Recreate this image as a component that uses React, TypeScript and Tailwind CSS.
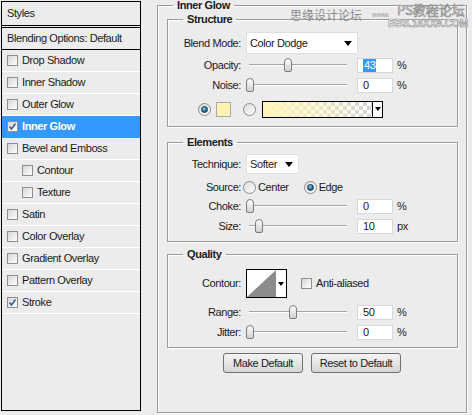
import React from "react";

const font = { fontFamily: '"Liberation Sans", Arial, sans-serif' };

function Check({ checked }: { checked?: boolean }) {
  return (
    <div className="w-[11px] h-[11px] border border-[#8f8f8f] bg-gradient-to-br from-[#d6d6d6] to-[#ffffff] flex items-center justify-center shrink-0">
      {checked && (
        <svg width="9" height="9" viewBox="0 0 9 9">
          <path d="M1.5 4.5 L3.5 7 L7.5 1.5" stroke="#3e5d92" strokeWidth="1.6" fill="none" />
        </svg>
      )}
    </div>
  );
}

function Radio({ on }: { on?: boolean }) {
  return (
    <div className="w-[13px] h-[13px] rounded-full border border-[#8a8a8a] bg-gradient-to-br from-[#dcdcdc] to-[#ffffff] flex items-center justify-center shrink-0">
      {on && (
        <div className="w-[7px] h-[7px] rounded-full bg-[radial-gradient(circle_at_40%_35%,#8fd0ef,#1d6b94_60%,#0f3e5c)] border border-[#0f3550]" />
      )}
    </div>
  );
}

function Arrow() {
  return (
    <svg width="8" height="5" viewBox="0 0 8 5" className="shrink-0">
      <path d="M0 0 H8 L4 5 Z" fill="#000" />
    </svg>
  );
}

function Slider({ pos }: { pos: number }) {
  return (
    <div className="relative w-[104px] h-[16px] shrink-0">
      <div className="absolute left-[3px] right-[3px] top-[7px] h-[1px] bg-[#a4a4a4]" />
      <div className="absolute left-[3px] right-[3px] top-[8px] h-[1px] bg-white" />
      <div
        className="absolute top-[1px] w-[8px] h-[14px] rounded-t-[4px] rounded-b-[2px] border border-[#7d7d7d] bg-gradient-to-b from-[#ffffff] to-[#cfcfcf]"
        style={{ left: pos }}
      />
    </div>
  );
}

function NumBox({ value, sel }: { value: string; sel?: boolean }) {
  return (
    <div className="w-[36px] h-[15px] bg-white border border-[#d4d9e0] flex items-center pl-[5px] shrink-0 text-[11px] leading-[13px]">
      {sel ? <span className="bg-[#3399ff] text-white px-[1px]">{value}</span> : value}
    </div>
  );
}

function Label({ children }: { children: React.ReactNode }) {
  return <div className="w-[73px] text-right shrink-0">{children}</div>;
}

function SliderRow({
  label,
  pos,
  value,
  unit,
  sel,
  mt,
}: {
  label: string;
  pos: number;
  value: string;
  unit: string;
  sel?: boolean;
  mt: string;
}) {
  return (
    <div className={"flex items-center h-[16px] " + mt}>
      <Label>{label}</Label>
      <div className="ml-[5px]">
        <Slider pos={pos} />
      </div>
      <div className="ml-[7px]">
        <NumBox value={value} sel={sel} />
      </div>
      <div className="ml-[4px]">{unit}</div>
    </div>
  );
}

function Group({
  title,
  className,
  children,
}: {
  title: string;
  className?: string;
  children: React.ReactNode;
}) {
  return (
    <fieldset
      className={
        "w-[291px] border border-[#9a9a9a] shadow-[1px_1px_0_#ffffff,inset_1px_1px_0_#ffffff] " +
        (className || "")
      }
    >
      <legend className="ml-[15px] px-[4px] font-bold text-[11px] leading-[12px]">{title}</legend>
      {children}
    </fieldset>
  );
}

const rows: { label: string; checked?: boolean; indent?: boolean; active?: boolean }[] = [
  { label: "Drop Shadow" },
  { label: "Inner Shadow" },
  { label: "Outer Glow" },
  { label: "Inner Glow", checked: true, active: true },
  { label: "Bevel and Emboss" },
  { label: "Contour", indent: true },
  { label: "Texture", indent: true },
  { label: "Satin" },
  { label: "Color Overlay" },
  { label: "Gradient Overlay" },
  { label: "Pattern Overlay" },
  { label: "Stroke", checked: true },
];

export default function App() {
  return (
    <div
      className="relative w-[472px] h-[415px] bg-[#ececec] flex items-start text-[11px] leading-[13px] tracking-[-0.4px] text-[#1a1a1a] overflow-hidden"
      style={font}
    >
      {/* Left styles list */}
      <div className="ml-[1px] mt-[1px] w-[140px] h-[410px] border border-black flex flex-col shrink-0">
        <div className="h-[23px] flex items-center pl-[5px]">Styles</div>
        <div className="h-[3px] border-y border-black" />
        <div className="h-[22px] border-b border-black flex items-center pl-[5px]">
          Blending Options: Default
        </div>
        {rows.map((r) => (
          <div
            key={r.label}
            className={
              "h-[22px] border-b flex items-center gap-[4px] " +
              (r.indent ? "pl-[20px] " : "pl-[5px] ") +
              (r.active ? "bg-[#3399ff] text-white font-bold border-[#3399ff]" : "border-white")
            }
          >
            <Check checked={r.checked} />
            <span>{r.label}</span>
          </div>
        ))}
      </div>

      {/* Right panel */}
      <fieldset className="ml-[16px] w-[310px] h-[413px] border border-[#9a9a9a] shadow-[1px_1px_0_#ffffff,inset_1px_1px_0_#ffffff] shrink-0">
        <legend className="ml-[15px] px-[4px] font-bold text-[11px] leading-[11px]">Inner Glow</legend>
        <div className="pl-[9px] pt-[2px] flex flex-col">
          {/* Structure */}
          <Group title="Structure">
            <div className="pt-[7px] pb-[9px] flex flex-col">
              <div className="flex items-center h-[22px]">
                <Label>Blend Mode:</Label>
                <div className="ml-[5px] w-[112px] h-[22px] bg-white border border-[#dedede] flex items-center pl-[3px] pr-[5px] justify-between">
                  <span>Color Dodge</span>
                  <Arrow />
                </div>
              </div>
              <SliderRow label="Opacity:" pos={38} value="43" unit="%" sel mt="mt-[3px]" />
              <SliderRow label="Noise:" pos={0} value="0" unit="%" mt="mt-[4px]" />
              <div className="flex items-center h-[16px] mt-[8px] pl-[30px]">
                <Radio on />
                <div className="ml-[5px] w-[15px] h-[15px] bg-[#fff3b0] border border-[#a9a9a9]" />
                <div className="ml-[12px]">
                  <Radio />
                </div>
                <div className="ml-[6px] w-[121px] h-[17px] border border-black flex">
                  <div className="relative flex-1 bg-[repeating-conic-gradient(#d4d4d4_0%_25%,#ffffff_0%_50%)] bg-[length:8px_8px]">
                    <div className="absolute inset-0 bg-gradient-to-r from-[#fff6b8] to-transparent" />
                  </div>
                  <div className="w-[10px] border-l border-black bg-white flex items-center justify-center">
                    <svg width="6" height="4" viewBox="0 0 6 4">
                      <path d="M0 0 H6 L3 4 Z" fill="#000" />
                    </svg>
                  </div>
                </div>
              </div>
            </div>
          </Group>

          {/* Elements */}
          <Group title="Elements" className="mt-[9px]">
            <div className="pt-[6px] pb-[7px] flex flex-col">
              <div className="flex items-center h-[20px]">
                <Label>Technique:</Label>
                <div className="ml-[5px] w-[53px] h-[20px] bg-white border border-[#dedede] flex items-center pl-[3px] pr-[5px] justify-between">
                  <span>Softer</span>
                  <Arrow />
                </div>
              </div>
              <div className="flex items-center h-[16px] mt-[5px]">
                <Label>Source:</Label>
                <div className="ml-[2px]">
                  <Radio />
                </div>
                <span className="ml-[2px]">Center</span>
                <div className="ml-[15px]">
                  <Radio on />
                </div>
                <span className="ml-[2px]">Edge</span>
              </div>
              <SliderRow label="Choke:" pos={0} value="0" unit="%" mt="mt-[3px]" />
              <SliderRow label="Size:" pos={9} value="10" unit="px" mt="mt-[4px]" />
            </div>
          </Group>

          {/* Quality */}
          <Group title="Quality" className="mt-[6px]">
            <div className="pt-[9px] pb-[7px] flex flex-col">
              <div className="flex items-center h-[29px]">
                <Label>Contour:</Label>
                <div className="ml-[5px] w-[41px] h-[29px] border border-black bg-white flex">
                  <svg width="29" height="27" viewBox="0 0 29 27" className="shrink-0">
                    <path d="M0 27 L29 0 L29 27 Z" fill="#8c8c8c" />
                  </svg>
                  <div className="flex-1 flex items-center justify-center">
                    <svg width="6" height="4" viewBox="0 0 6 4">
                      <path d="M0 0 H6 L3 4 Z" fill="#000" />
                    </svg>
                  </div>
                </div>
                <div className="ml-[14px]">
                  <Check />
                </div>
                <span className="ml-[4px]">Anti-aliased</span>
              </div>
              <SliderRow label="Range:" pos={43} value="50" unit="%" mt="mt-[6px]" />
              <SliderRow label="Jitter:" pos={0} value="0" unit="%" mt="mt-[4px]" />
            </div>
          </Group>

          {/* Buttons */}
          <div className="mt-[5px] flex justify-center gap-[8px] pr-[9px]">
            <button className="w-[80px] h-[20px] rounded-[3px] border border-[#707070] bg-gradient-to-b from-[#f4f4f4] to-[#d6d6d6] text-[11px]">
              Make Default
            </button>
            <button className="w-[90px] h-[20px] rounded-[3px] border border-[#707070] bg-gradient-to-b from-[#f4f4f4] to-[#d6d6d6] text-[11px]">
              Reset to Default
            </button>
          </div>
        </div>
      </fieldset>

      {/* Watermark */}
      <div
        className="absolute left-[290px] top-[8px] text-[12px] leading-[13px] tracking-normal text-[#8a8a8a]"
        style={{ fontFamily: '"Noto Sans CJK SC", sans-serif' }}
      >
        思缘设计论坛
      </div>
      <div className="absolute left-[372px] top-[10px] text-[8px] leading-[9px] text-[#9a9a9a]">www.</div>
      <div
        className="absolute left-[397px] top-[3px] text-[13px] leading-[14px] tracking-normal text-white [-webkit-text-stroke:0.7px_#8a8a8a]"
        style={{ fontFamily: '"Noto Sans CJK SC", sans-serif' }}
      >
        PS教程论坛
      </div>
      <div className="absolute left-[388px] top-[19px] text-[10px] leading-[10px] tracking-normal font-bold text-white [-webkit-text-stroke:0.6px_#8a8a8a]">
        BBS.16XX8.COM
      </div>
    </div>
  );
}
